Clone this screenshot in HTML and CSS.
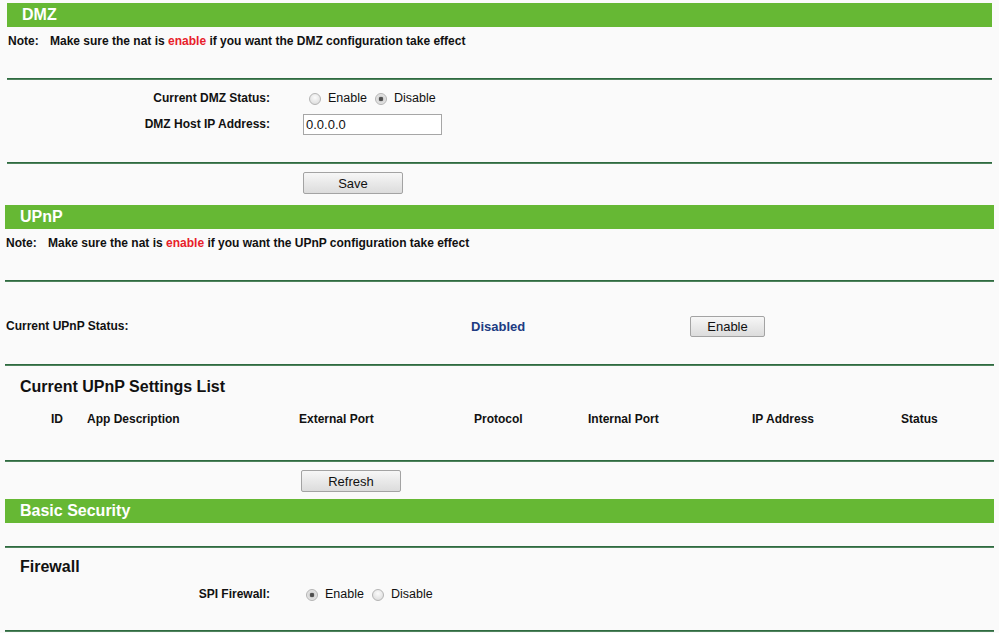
FILE: index.html
```html
<!DOCTYPE html>
<html>
<head>
<meta charset="utf-8">
<title>Router settings</title>
<link rel="stylesheet" href="styles.css">
</head>
<body>
<div class="section dmz">
  <div class="bar">DMZ</div>
  <div class="note-block">
    <div class="note"><span class="note-label">Note:</span><span>Make sure the nat is <span class="red">enable</span> if you want the DMZ configuration take effect</span></div>
  </div>
  <div class="rule"></div>
  <div class="form-block">
    <div class="frow">
      <div class="flabel">Current DMZ Status:</div>
      <div class="fvalue">
        <label class="radio"><input type="radio" name="dmz"><span>Enable</span></label>
        <label class="radio"><input type="radio" name="dmz" checked><span>Disable</span></label>
      </div>
    </div>
    <div class="frow">
      <div class="flabel">DMZ Host IP Address:</div>
      <div class="fvalue"><input class="text" type="text" value="0.0.0.0"></div>
    </div>
  </div>
  <div class="rule"></div>
  <div class="btn-block"><button class="btn wide">Save</button></div>
</div>

<div class="section">
  <div class="bar">UPnP</div>
  <div class="note-block">
    <div class="note"><span class="note-label">Note:</span><span>Make sure the nat is <span class="red">enable</span> if you want the UPnP configuration take effect</span></div>
  </div>
  <div class="rule"></div>
  <div class="status-block">
    <div class="status-row">
      <div class="slabel">Current UPnP Status:</div>
      <div class="svalue">Disabled</div>
      <div><button class="btn small">Enable</button></div>
    </div>
  </div>
  <div class="rule"></div>
  <div class="list-block">
    <div class="title">Current UPnP Settings List</div>
    <div class="thead">
      <div>ID</div>
      <div>App Description</div>
      <div>External Port</div>
      <div>Protocol</div>
      <div>Internal Port</div>
      <div>IP Address</div>
      <div>Status</div>
    </div>
  </div>
  <div class="rule"></div>
  <div class="btn-block refresh"><button class="btn wide">Refresh</button></div>
</div>

<div class="section">
  <div class="bar">Basic Security</div>
  <div class="gap-block"></div>
  <div class="rule"></div>
  <div class="fw-block">
    <div class="title">Firewall</div>
    <div class="frow spi">
      <div class="flabel">SPI Firewall:</div>
      <div class="fvalue">
        <label class="radio"><input type="radio" name="spi" checked><span>Enable</span></label>
        <label class="radio"><input type="radio" name="spi"><span>Disable</span></label>
      </div>
    </div>
  </div>
  <div class="rule"></div>
</div>
</body>
</html>
```

FILE: styles.css
```css
html, body {
  margin: 0;
  padding: 0;
  background: #fafafa;
}
body {
  font-family: "Liberation Sans", Arial, sans-serif;
  font-size: 12px;
  color: #111;
  width: 999px;
  height: 633px;
  overflow: hidden;
}
.section {
  margin: 0 5px;
}
.section.dmz {
  margin: 3px 7px 0 7px;
}
.bar {
  height: 24px;
  line-height: 24px;
  background: #66b834;
  color: #fff;
  font-weight: bold;
  font-size: 16px;
  padding-left: 15px;
}
.note-block {
  height: 51px;
  box-sizing: border-box;
  padding-top: 7px;
}
.note {
  display: flex;
  font-weight: bold;
  line-height: 14px;
  padding-left: 1px;
}
.note-label {
  width: 42px;
}
.red {
  color: #e8202a;
}
.rule {
  height: 2px;
  background: linear-gradient(#1f5e32, #5f8f6b);
}
.form-block {
  padding: 5px 0 25px 0;
}
.frow {
  display: grid;
  grid-template-columns: 263px 1fr;
  column-gap: 33px;
  height: 26px;
  align-items: center;
}
.flabel {
  text-align: right;
  font-weight: bold;
}
.fvalue {
  display: flex;
  align-items: center;
}
.radio {
  display: inline-flex;
  align-items: center;
  font-size: 12.5px;
  margin-right: 2px;
}
.radio input {
  appearance: none;
  -webkit-appearance: none;
  width: 12px;
  height: 12px;
  margin: 2px 7px 0 6px;
  border: 1px solid #b4b4b4;
  border-radius: 50%;
  background: radial-gradient(circle at 50% 35%, #fbfbfb 0%, #e2e2e2 70%, #d4d4d4 100%);
  box-sizing: border-box;
}
.radio input:checked {
  background: radial-gradient(circle, #4a4a4a 0, #555 2px, #d6d6d6 2.6px, #f2f2f2 100%);
}
.text {
  width: 139px;
  height: 21px;
  box-sizing: border-box;
  border: 1px solid #a6a6a6;
  background: #fff;
  font-family: "Liberation Sans", Arial, sans-serif;
  font-size: 13px;
  padding: 0 2px;
  margin: 0;
  color: #111;
}
.btn-block {
  padding: 8px 0 11px 296px;
  height: 22px;
}
.btn-block.refresh {
  padding: 8px 0 7px 296px;
}
.btn {
  font-family: "Liberation Sans", Arial, sans-serif;
  font-size: 13px;
  color: #111;
  height: 22px;
  border: 1px solid #a3a3a3;
  border-radius: 2px;
  background: linear-gradient(#f7f7f7, #e9e9e9 50%, #dcdcdc);
  padding: 0;
  margin: 0;
  display: block;
}
.btn.wide {
  width: 100px;
}
.btn.small {
  width: 75px;
  height: 21px;
}
.status-block {
  height: 82px;
  box-sizing: border-box;
  padding-top: 32px;
}
.status-row {
  display: grid;
  grid-template-columns: 466px 219px auto;
  align-items: center;
  height: 24px;
}
.slabel {
  font-weight: bold;
  padding-left: 1px;
}
.svalue {
  font-weight: bold;
  font-size: 13px;
  color: #203b82;
}
.title {
  font-size: 16px;
  font-weight: bold;
  height: 20px;
  line-height: 20px;
  padding-left: 15px;
  color: #111;
}
.list-block {
  padding: 11px 0 31px 0;
}
.thead {
  display: grid;
  grid-template-columns: 36px 212px 175px 114px 164px 149px auto;
  padding-left: 46px;
  margin-top: 12px;
  height: 20px;
  line-height: 20px;
  font-weight: bold;
}
.gap-block {
  height: 23px;
}
.fw-block {
  padding: 9px 0 26px 0;
}
.frow.spi {
  margin-top: 7px;
  height: 20px;
  grid-template-columns: 265px 1fr;
  column-gap: 33px;
}
.frow.spi .fvalue {
  margin-left: -3px;
}
```
